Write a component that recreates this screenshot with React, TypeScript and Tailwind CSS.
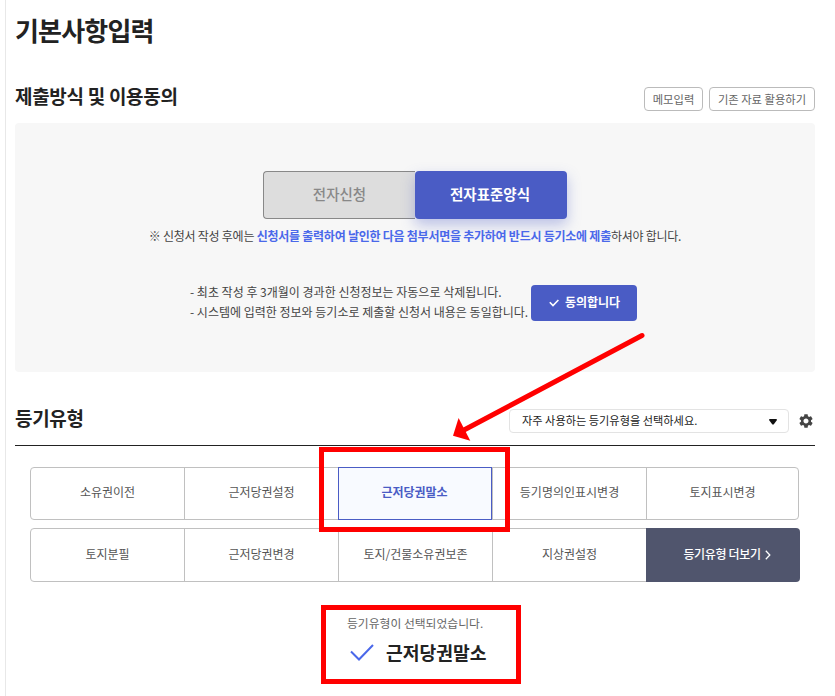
import clsx from "clsx";

const firstRow = ["소유권이전", "근저당권설정", "근저당권말소", "등기명의인표시변경", "토지표시변경"];
const secondRow = ["토지분필", "근저당권변경", "토지/건물소유권보존", "지상권설정"];

const TypeCell = ({ label, selected }: { label: string; selected?: boolean }) => (
  <button
    type="button"
    className={clsx(
      "flex items-center justify-center border text-[12px] pb-[3px] cursor-pointer first:rounded-l last:rounded-r",
      selected
        ? "w-[154px] pr-px border-[#4a5cc5] bg-[#f8faff] text-[#4a5cc5] font-bold"
        : "w-[155px] -mr-px last:w-[153px] last:mr-0 border-[#c0c0c0] text-[#555]"
    )}
  >
    {label}
  </button>
);

const SubmitSection = () => (
  <section>
    <div className="flex justify-between h-[41px]">
      <h2 className="text-[19px] leading-[28px] font-bold tracking-[-0.3px]">제출방식 및 이용동의</h2>
      <div className="flex gap-[6px] pt-[5px] text-[11.3px] text-[#666]">
        <button type="button" className="w-[59px] h-6 border border-[#bbb] rounded whitespace-nowrap cursor-pointer">
          메모입력
        </button>
        <button type="button" className="w-[106px] h-6 border border-[#bbb] rounded whitespace-nowrap cursor-pointer">
          기존 자료 활용하기
        </button>
      </div>
    </div>

    <div className="h-[249px] bg-[#f7f7f7] rounded pt-12 text-[12px] text-[#444]">
      <div className="flex justify-center h-12 text-[14.5px]">
        <button
          type="button"
          className="w-[152px] border border-r-0 border-[#888] rounded-l bg-[#ddd] text-[#888] font-medium pb-[3px] cursor-pointer"
        >
          전자신청
        </button>
        <button
          type="button"
          className="w-[152px] rounded bg-[#4a5cc5] text-white font-bold pb-[3px] pr-[2px] shadow-[0_6px_14px_rgba(74,92,197,0.35)] cursor-pointer"
        >
          전자표준양식
        </button>
      </div>
      <p className="mt-[7px] leading-5 text-center whitespace-nowrap tracking-[-0.25px]">
        ※ 신청서 작성 후에는{" "}
        <b className="text-[#4a68ea]">
          신청서를 출력하여 날인한 다음 첨부서면을 추가하여 반드시 등기소에 제출
        </b>
        하셔야 합니다.
      </p>
      <div className="flex mt-9 pl-[175px]">
        <div className="w-[341px] leading-5 whitespace-nowrap">
          <p>- 최초 작성 후 3개월이 경과한 신청정보는 자동으로 삭제됩니다.</p>
          <p>- 시스템에 입력한 정보와 등기소로 제출할 신청서 내용은 동일합니다.</p>
        </div>
        <button
          type="button"
          className="flex items-center justify-center gap-[6px] w-[106px] h-9 pl-px mt-[3px] rounded bg-[#4a5cc5] text-white font-bold cursor-pointer"
        >
          <svg width="10" height="8" viewBox="0 0 10 8" fill="none" stroke="currentColor" strokeWidth="1.6">
            <path d="M.8 3.2 4 6.6 9.4 1" />
          </svg>
          <span className="pb-[3px]">동의합니다</span>
        </button>
      </div>
    </div>
  </section>
);

const TypeSection = () => (
  <section className="mt-8">
    <div className="flex justify-between h-[42px] border-b border-[#222]">
      <h2 className="text-[19px] leading-[28px] font-bold tracking-[-0.3px]">등기유형</h2>
      <div className="flex items-start pt-[5px] pr-[2px]">
        <div className="flex items-center justify-between w-[280px] h-6 pl-3 pr-[11px] border border-[#e3e3e3] rounded text-[11.2px] text-[#222]">
          <span className="pb-px">자주 사용하는 등기유형을 선택하세요.</span>
          <svg className="mt-px" width="8" height="6" viewBox="0 0 8 6" fill="#111">
            <path d="M.5 0h7L8 1 4.6 5.5H3.4L0 1z" />
          </svg>
        </div>
        <svg className="ml-[10px] mt-[5px]" width="14" height="14" viewBox="2 2 20 20" fill="#444">
          <path d="M19.14 12.94c.04-.3.06-.61.06-.94 0-.32-.02-.64-.07-.94l2.03-1.58c.18-.14.23-.41.12-.61l-1.92-3.32c-.12-.22-.37-.29-.59-.22l-2.39.96c-.5-.38-1.03-.7-1.62-.94l-.36-2.54c-.04-.24-.24-.41-.48-.41h-3.84c-.24 0-.43.17-.47.41l-.36 2.54c-.59.24-1.13.57-1.62.94l-2.39-.96c-.22-.08-.47 0-.59.22L2.74 8.87c-.12.21-.08.47.12.61l2.03 1.58c-.05.3-.09.63-.09.94s.02.64.07.94l-2.03 1.58c-.18.14-.23.41-.12.61l1.92 3.32c.12.22.37.29.59.22l2.39-.96c.5.38 1.03.7 1.62.94l.36 2.54c.05.24.24.41.48.41h3.84c.24 0 .44-.17.47-.41l.36-2.54c.59-.24 1.13-.56 1.62-.94l2.39.96c.22.08.47 0 .59-.22l1.92-3.32c.12-.22.07-.47-.12-.61zM12 15.6c-1.98 0-3.6-1.62-3.6-3.6s1.62-3.6 3.6-3.6 3.6 1.62 3.6 3.6-1.62 3.6-3.6 3.6" />
        </svg>
      </div>
    </div>

    <div className="relative px-[15px] pt-[21px]">
      <div className="flex h-[53px]">
        {firstRow.map((label) => (
          <TypeCell key={label} label={label} selected={label === "근저당권말소"} />
        ))}
      </div>
      <div className="flex h-[54px] mt-2">
        {secondRow.map((label) => (
          <TypeCell key={label} label={label} />
        ))}
        <button
          type="button"
          className="relative flex items-center justify-center gap-1 w-[154px] pl-2 rounded-r bg-[#50556d] text-white text-[12px] font-medium pb-px whitespace-nowrap cursor-pointer"
        >
          <span className="tracking-[-0.35px] pb-px">등기유형 더보기</span>
          <svg className="mt-px" width="6" height="10" viewBox="0 0 6 10" fill="none" stroke="currentColor" strokeWidth="1.3">
            <path d="M.8.8 4.8 5 .8 9.2" />
          </svg>
        </button>
      </div>
      <div className="absolute left-[304px] top-px w-[191px] h-[85px] border-[5px] border-[#f00]" />
    </div>

    <div className="w-[200px] h-[79px] mt-[23px] ml-[306px] pl-[21px] pt-1 border-[5px] border-[#f00]">
      <p className="text-[11.8px] leading-[18px] text-[#666] whitespace-nowrap">등기유형이 선택되었습니다.</p>
      <div className="flex items-center pl-[3px] mt-[6px]">
        <svg width="24" height="19" viewBox="0 0 24 19" fill="none" stroke="#4a68ea" strokeWidth="2">
          <path d="M1 8.5 9 16.5 23 2" />
        </svg>
        <strong className="ml-3 text-[18.2px] leading-[28px] text-[#222]">근저당권말소</strong>
      </div>
    </div>
  </section>
);

export default function App() {
  return (
    <div className="relative w-[835px] h-[696px] overflow-hidden bg-white font-['Noto_Sans_CJK_KR',sans-serif] text-[#222]">
      <main className="w-[810px] h-full ml-[5px] pl-[9px] border-l border-[#e8e8e8]">
        <h1 className="h-[82px] pt-[11px] text-[26px] leading-[38px] font-bold tracking-[-0.8px]">기본사항입력</h1>
        <SubmitSection />
        <TypeSection />
      </main>

      <svg className="absolute left-[450px] top-[330px]" width="200" height="115" viewBox="450 330 200 115">
        <path d="M642 335.5 464 430" stroke="#f00" strokeWidth="5" strokeLinecap="round" />
        <path d="M453 435.7 458.6 418 470.3 440.8z" fill="#f00" />
      </svg>
    </div>
  );
}
